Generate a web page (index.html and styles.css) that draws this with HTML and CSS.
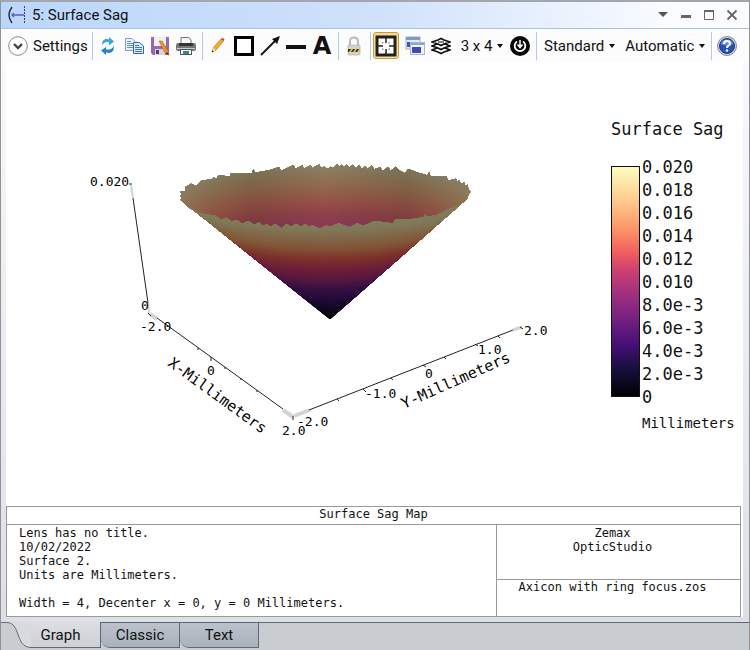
FILE: index.html
```html
<!DOCTYPE html>
<html lang="en">
<head>
  <meta charset="utf-8">
  <meta name="viewport" content="width=device-width, initial-scale=1.0">
  <title>5: Surface Sag</title>
  <link rel="stylesheet" href="styles.css">
</head>
<body>
  <!-- Title bar -->
  <header class="titlebar">
    <svg class="app-icon" width="20" height="20" viewBox="0 0 20 20" fill="none">
      <path d="M5 2 Q-1 10 5 18" stroke="#333" stroke-width="1.5"/>
      <path d="M5 10 H17 M7 8 L5 10 L7 12" stroke="#5560b8" stroke-width="1.3"/>
      <path d="M17.500 1 V18" stroke="#444" stroke-dasharray="2 1"/>
    </svg>
    <h1>5: Surface Sag</h1>
    <div class="window-buttons">
      <button aria-label="Menu"><svg width="12" height="12"><path d="M1 3 H11 L6 8 Z" fill="#555"/></svg></button>
      <button aria-label="Minimize"><svg width="12" height="12"><path d="M1 6 H11 V9 H1 Z" fill="#666"/></svg></button>
      <button aria-label="Maximize"><svg width="12" height="12"><path d="M1.500 2 V10.500 H10.500 V2" fill="none" stroke="#666"/><path d="M1 2 H11" stroke="#666" stroke-width="2"/></svg></button>
      <button aria-label="Close"><svg width="12" height="12"><path d="M1.500 1.500 L10.500 10.500 M10.500 1.500 L1.500 10.500" stroke="#666" stroke-width="1.8"/></svg></button>
    </div>
  </header>

  <!-- Toolbar -->
  <nav class="toolbar">
    <button class="settings">
      <svg width="20" height="20" viewBox="0 0 20 20" fill="none">
        <circle cx="10" cy="10" r="9.300" fill="#fff" stroke="#888"/>
        <path d="M6 8 L10 12 L14 8" stroke="#444" stroke-width="2.400"/>
      </svg>
      Settings
    </button>
    <span class="sep"></span>
    <button class="tool" aria-label="Refresh">
      <svg width="20" height="20" viewBox="0 0 20 20">
        <path d="M4 9 C4 4 7 2 11 3.500 V1 L16 5.500 L11 9.500 V6.500 C8 5.500 6 6.500 4 9 Z" fill="#35a7e0"/>
        <path d="M16 10 C16 16 13 18 8 16.500 V19 L3 14.500 L8 11 V13.500 C12 14 14 13 16 10 Z" fill="#1c86cf"/>
      </svg>
    </button>
    <button class="tool" aria-label="Copy">
      <svg width="20" height="20" viewBox="0 0 20 20">
        <path d="M1.500 2.500 H8 L11.500 6 V14.500 H1.500 Z" fill="#eaf3fd" stroke="#7b9fd0"/>
        <path d="M3 5.500 H7 M3 7.500 H9 M3 9.500 H9 M3 11.500 H9" stroke="#5f93cf"/>
        <path d="M9.500 6.500 H15.500 L19.500 10 V17.500 H9.500 Z" fill="#dcebfc" stroke="#3c62ad"/>
        <path d="M11 9.500 H15 M11 11.500 H18 M11 13.500 H18 M11 15.500 H18" stroke="#3f7ac4"/>
      </svg>
    </button>
    <button class="tool" aria-label="Save">
      <svg width="20" height="20" viewBox="0 0 20 20">
        <path d="M1 1 H19 V19 H3 L1 17 Z" fill="#9467b4"/>
        <rect x="4" y="1" width="12" height="9" fill="#f0edf5"/>
        <rect x="5" y="13" width="10" height="6" fill="#d8d4df"/>
        <rect x="6" y="14" width="3" height="4" fill="#54406c"/>
        <path d="M9 5 L12 5 L18 15 L19 19 L15 17 Z" fill="#f29421" stroke="#b35c0c" stroke-width=".5"/>
        <path d="M17 16 L19 19 L16 17.500 Z" fill="#222"/>
      </svg>
    </button>
    <button class="tool" aria-label="Print">
      <svg width="20" height="20" viewBox="0 0 20 20">
        <path d="M5 8 V1.500 H13 L15 4 V8" fill="#f7f7f7" stroke="#777"/>
        <rect x="0" y="7" width="20" height="8" rx="2" fill="#777"/>
        <path d="M3 7 H17 V10 H3 Z" fill="#333"/>
        <path d="M1 12.500 H19" stroke="#ccc"/>
        <rect x="4.500" y="13.500" width="11" height="5" fill="#fff" stroke="#555"/>
        <path d="M7 15 H10 V18 H7 Z" fill="#2b83c6"/>
        <path d="M10 15 H13 V18 H10 Z" fill="#2f8c78"/>
      </svg>
    </button>
    <span class="sep"></span>
    <button class="tool" aria-label="Pencil">
      <svg width="20" height="20" viewBox="0 0 20 20">
        <path d="M4 16 L5.500 11.500 L13 3 L15.500 5 L8 14 Z" fill="#f5ab24" stroke="#b67512" stroke-width=".7"/>
        <path d="M5.500 11.500 L8 14 L4 16 Z" fill="#ecd6a6"/>
        <path d="M4.500 14.500 L5.500 15.500 L3.500 16.500 Z" fill="#222"/>
        <path d="M13 3 L15.500 5 L16.500 3.500 L14.500 1.500 Z" fill="#d34848"/>
      </svg>
    </button>
    <button class="tool" aria-label="Rectangle">
      <svg width="20" height="20"><rect x="1.500" y="1.500" width="17" height="17" fill="#fff" stroke="#000" stroke-width="3"/></svg>
    </button>
    <button class="tool" aria-label="Arrow">
      <svg width="20" height="20"><path d="M1 19 L15 5" stroke="#111" stroke-width="1.800"/><path d="M20 0 L17 8 L12 3 Z" fill="#111"/></svg>
    </button>
    <button class="tool" aria-label="Line">
      <svg width="20" height="20"><rect y="9" width="20" height="4" fill="#111"/></svg>
    </button>
    <button class="tool text-tool" aria-label="Text">A</button>
    <span class="sep"></span>
    <button class="tool" aria-label="Lock">
      <svg width="20" height="20" viewBox="0 0 20 20">
        <path d="M6 10 V5 Q6 1.500 10 1.500 Q14 1.500 14 5 V10" fill="none" stroke="#bbb" stroke-width="2"/>
        <rect x="4" y="9" width="12" height="10" rx="1" fill="#d2d2d2" stroke="#aaa" stroke-width=".6"/>
        <rect x="4" y="13" width="12" height="3" fill="#333"/>
        <path d="M5 16 L7 13 H9 L7 16 Z M9 16 L11 13 H13 L11 16 Z M13 16 L15 13 H16 V16 Z" fill="#e0c12b"/>
      </svg>
    </button>
    <span class="sep"></span>
    <button class="tool active" aria-label="Fit window">
      <svg width="22" height="22" viewBox="0 0 22 22" fill="none">
        <rect x="2" y="2" width="18" height="18" fill="#fff" stroke="#222" stroke-width="3"/>
        <path d="M11 3 V8 M11 14 V19 M3 11 H8 M14 11 H19" stroke="#222" stroke-width="1.500"/>
        <path d="M7.500 9 V7.500 H9 M13 7.500 H14.500 V9 M7.500 13 V14.500 H9 M13 14.500 H14.500 V13" stroke="#aaa"/>
      </svg>
    </button>
    <button class="tool" aria-label="Windows">
      <svg width="20" height="20" viewBox="0 0 20 20">
        <rect x="1" y="1" width="14" height="12" fill="#e3e9f1" stroke="#aab4c2"/>
        <rect x="1" y="1" width="14" height="3" fill="#7c9acb"/>
        <rect x="2" y="6" width="5" height="5" fill="#3f55b5"/>
        <rect x="5.500" y="6.500" width="14" height="12" fill="#f2f4f8" stroke="#aab4c2"/>
        <rect x="6" y="7" width="13" height="2" fill="#8ba5d0"/>
        <rect x="7" y="11" width="9" height="6" fill="#3a4db0"/>
      </svg>
    </button>
    <button class="tool" aria-label="Layers">
      <svg width="20" height="20" viewBox="0 0 20 20" fill="#fff" stroke="#111" stroke-width="1.700">
        <path d="M1 14 L6 12 H14 L19 14 L13 16 L10 17.500 L7 16 Z"/>
        <path d="M1 10 L6 8 H14 L19 10 L13 12 L10 13.500 L7 12 Z"/>
        <path d="M1 6 L7 4 L10 2.500 L13 4 L19 6 L13 8 L10 9.500 L7 8 Z"/>
        <path d="M7 6 H13" stroke-width="1"/>
      </svg>
    </button>
    <button class="menu grid-size">3 x 4 <span class="caret"></span></button>
    <button class="tool" aria-label="Reset view">
      <svg width="20" height="20" viewBox="0 0 20 20" fill="none">
        <circle cx="10" cy="10" r="10" fill="#080808"/>
        <path d="M7 5.500 A5.300 5.300 0 1 0 13 5.500" stroke="#fff" stroke-width="1.800"/>
        <path d="M10 4 V10 M7.500 8.500 L10 11.500 L12.500 8.500" stroke="#fff" stroke-width="1.500"/>
      </svg>
    </button>
    <span class="sep"></span>
    <button class="menu">Standard <span class="caret"></span></button>
    <button class="menu">Automatic <span class="caret"></span></button>
    <span class="sep last"></span>
    <button class="tool" aria-label="Help">
      <svg width="20" height="20" viewBox="0 0 20 20">
        <circle cx="10" cy="10" r="9.500" fill="#d2d5dc" stroke="#888"/>
        <circle cx="10" cy="10" r="7.500" fill="#2451b5" stroke="#183a8c"/>
        <path d="M3.500 8 A7 7 0 0 1 16.500 8 Q10 11 3.500 8 Z" fill="#668bdc"/>
        <path d="M7 8 Q7 5 10 5 Q13 5 13 7.500 Q13 9 11.200 10 Q10 10.500 10 12" fill="none" stroke="#fff" stroke-width="2"/>
        <circle cx="10" cy="14.500" r="1.200" fill="#fff"/>
      </svg>
    </button>
  </nav>

  <main class="page">
    <div class="chart">
      <!-- 3D plot -->
      <svg class="plot" viewBox="6 62 600 444" preserveAspectRatio="xMinYMin meet">
        <defs>
          <clipPath id="outline">
            <path d="M32 150 L36 143 L31 138 L36 132 L31 125 L48 122 L45 112 L63 101 L80 108 L97 90 L108 93 L112 88 L125 90 L130 83 L140 85 L146 75 L180 80 L183 69 L215 71 L246 69 L250 57 L255 68 L300 60 L328 51 L333 63 L371 45 L376 56 L397 46 L402 56 L422 46 L427 55 L447 43 L452 53 L462 50 L474 58 L480 50 L490 55 L502 42 L508 50 L515 44 L522 52 L530 44 L538 52 L549 44 L556 55 L568 46 L575 58 L585 48 L592 58 L605 46 L612 58 L630 52 L638 63 L654 51 L662 62 L678 50 L690 62 L705 70 L715 57 L745 68 L772 76 L778 66 L781 78 L830 80 L834 92 L858 86 L862 97 L868 91 L873 102 L882 97 L886 107 L893 104 L895 118 L902 125 L895 132 L893 145 L480 508 Z"/>
          </clipPath>
          <clipPath id="front-side">
            <path d="M32 150 L60 175 L90 190 L137 197 L153 209 L170 203 L183 214 L203 211 L215 222 L236 213 L253 224 L267 217 L278 228 L290 222 L302 231 L315 222 L335 235 L350 222 L364 230 L378 221 L392 230 L406 222 L418 231 L427 225 L450 236 L468 226 L480 231 L505 220 L540 232 L562 220 L580 228 L612 213 L668 220 L677 208 L720 208 L761 202 L766 192 L770 201 L800 195 L835 178 L865 168 L893 145 L480 508 Z"/>
          </clipPath>
          <linearGradient id="shade">
            <stop offset="0" stop-opacity="0"/>
            <stop offset=".25" stop-opacity=".12"/>
            <stop offset=".5" stop-opacity="0"/>
            <stop offset=".78" stop-opacity=".12"/>
            <stop offset="1" stop-opacity="0"/>
          </linearGradient>
        </defs>
        <g transform="translate(170 150) scale(.33333)">
          <g id="inside" clip-path="url(#outline)"></g>
          <rect x="30" y="30" width="870" height="240" fill="url(#shade)" clip-path="url(#outline)"/>
          <g id="outside" clip-path="url(#front-side)"></g>
        </g>

        <!-- axis ends -->
        <g stroke="#d3d3d3" stroke-width="4">
          <path d="M131 185 L133 198" stroke-width="2"/>
          <path d="M148 303 L149 313" stroke-width="2"/>
          <path d="M150 314 L157 319"/>
          <path d="M283 410 L293 417"/>
          <path d="M294 416 L310 410"/>
          <path d="M513 330 L522 327" stroke-width="3"/>
        </g>
        <g class="axis">
          <path d="M133 198 L148 303"/>
          <path d="M157 318 L283 409"/>
          <path d="M309 410 L513 330"/>
          <path d="M129 184 H132 M148 313 L151 316 M211 357 V361 M293 416 V420 M363 389 L366 392 M423 365 L426 367 M475 344 L478 346 M520 327 L523 329 M198 348 V350 M225 367 V369 M241 378 V380 M257 390 V392 M337 399 L339 401 M391 378 L393 380 M444 357 L446 359 M498 336 L500 338"/>
        </g>
        <g class="tick">
          <text x="90" y="186">0.020</text>
          <text x="141" y="310">0</text>
          <text x="140" y="331">-2.0</text>
          <text x="207" y="375">0</text>
          <text x="282" y="435">2.0</text>
          <text x="297" y="426">-2.0</text>
          <text x="365" y="398">-1.0</text>
          <text x="425" y="378">0</text>
          <text x="478" y="354">1.0</text>
          <text x="524" y="335">2.0</text>
        </g>
        <g class="axis-title">
          <text transform="translate(167 365) rotate(36)">X-Millimeters</text>
          <text transform="translate(404 409) rotate(-24)">Y-Millimeters</text>
        </g>
      </svg>

      <!-- Color scale -->
      <div class="legend">
        <h2>Surface Sag</h2>
        <div class="scale">
          <div class="bar"></div>
          <ul>
            <li>0.020</li>
            <li>0.018</li>
            <li>0.016</li>
            <li>0.014</li>
            <li>0.012</li>
            <li>0.010</li>
            <li>8.0e-3</li>
            <li>6.0e-3</li>
            <li>4.0e-3</li>
            <li>2.0e-3</li>
            <li>0</li>
          </ul>
        </div>
        <p>Millimeters</p>
      </div>
    </div>

    <table class="info">
      <tr><th colspan="2">Surface Sag Map</th></tr>
      <tr>
        <td class="details" rowspan="2">Lens has no title.<br>10/02/2022<br>Surface 2.<br>Units are Millimeters.<br><br>Width = 4, Decenter x = 0, y = 0 Millimeters.</td>
        <td class="product">Zemax<br>OpticStudio</td>
      </tr>
      <tr><td class="file">Axicon with ring focus.zos</td></tr>
    </table>
  </main>

  <!-- View tabs -->
  <footer class="tabs">
    <svg class="tab-curve" width="30" height="27" viewBox="0 0 30 27">
      <path d="M6 0 H30 V26 C14 26 20 1 6 1 Z" fill="#d8dadd"/>
      <path d="M0 .5 H6 C20 1 14 25.500 30 25.500" fill="none" stroke="#5f6878"/>
    </svg>
    <button class="tab current">Graph</button>
    <button class="tab">Classic</button>
    <button class="tab">Text</button>
  </footer>

  <script src="plot.js"></script>
</body>
</html>
```
FILE: styles.css
```css
* {
  box-sizing: border-box;
}

body {
  font-family: Roboto, "Open Sans", sans-serif;
  font-size: 15px;
  color: #111;
  margin: 0;
  min-height: 100vh;
  display: flex;
  flex-direction: column;
  background: linear-gradient(#fcfcfd, #dcdee2);
  border: 1px solid #8e929a;
  border-top: 2px solid #a3a6ac;
  border-bottom: none;
}

button {
  font: inherit;
  color: inherit;
  background: none;
  border: none;
  padding: 0;
  display: flex;
  align-items: center;
  justify-content: center;
  white-space: nowrap;
}

/* Title bar */
.titlebar {
  display: flex;
  align-items: center;
  height: 27px;
  padding: 0 11px 0 6px;
  background: linear-gradient(to right, #bbd6fb, #cfe1fc 50%, #fafcff 90%);
  border-bottom: 1px solid #a9c4e4;
}

.titlebar h1 {
  font-size: 15px;
  font-weight: normal;
  margin: 0 auto 0 5px;
}

.window-buttons {
  display: flex;
  gap: 11px;
}

/* Toolbar */
.toolbar {
  display: flex;
  align-items: center;
  height: 33px;
  padding: 0 9px 0 7px;
  background: #fcfcfd;
}

.settings {
  flex: none;
  width: 81px;
  gap: 5px;
  justify-content: flex-start;
}

.sep {
  flex: none;
  width: 1px;
  height: 28px;
  margin: 0 2px 0 3px;
  background: #b3cbe6;
}

.tool {
  width: 26px;
  height: 27px;
  flex: none;
}

.text-tool {
  font-family: "DejaVu Sans", sans-serif;
  font-size: 24px;
  font-weight: bold;
  line-height: 24px;
}

.active {
  background: linear-gradient(#fbd98d, #fbe39e);
  border: 1px solid #c99a3c;
  border-radius: 3px;
  margin-right: 3px;
}

.menu {
  gap: 5px;
  padding: 0 5px;
}

.grid-size {
  width: 53px;
  padding: 0 0 0 3px;
}

.caret {
  border: 3px solid transparent;
  border-top: 4px solid #111;
  border-bottom: none;
}

.last {
  margin-left: auto;
}

/* Chart */
.page {
  flex: 1;
  display: flex;
  flex-direction: column;
  margin: 0 6px 5px 5px;
  padding-right: 2px;
  background: #fff;
}

.chart {
  flex: 1;
  display: flex;
  font-family: "DejaVu Sans Mono", monospace;
}

.plot {
  flex: 1;
  min-width: 0;
  height: 444px;
}

.axis {
  fill: none;
  stroke: #222;
  stroke-width: 1;
}

.tick {
  font-size: 13px;
}

.axis-title {
  font-size: 15px;
}

.legend {
  width: 130px;
  padding-top: 57px;
}

.legend h2 {
  font-size: 17px;
  font-weight: normal;
  line-height: 20px;
  margin: 0 0 17px;
}

.scale {
  display: flex;
}

.bar {
  width: 29px;
  margin: 10px 0 12px;
  border: 1px solid #111;
  background: linear-gradient(#fcfdbf, #fec98d 15%, #fd9567 27%, #f1605d 37%, #cd4071 45%, #9e2f7f 56%, #721f81 67%, #440f76 78%, #180f3d 88%, #000004);
}

.legend ul {
  list-style: none;
  margin: 0 0 0 2px;
  padding: 0;
  font-size: 17px;
  line-height: 23px;
}

.legend p {
  font-size: 14px;
  line-height: 20px;
  margin: 4px 0 0 31px;
}

/* Info table */
.info {
  width: 100%;
  border-collapse: collapse;
  font-family: "DejaVu Sans Mono", monospace;
  font-size: 12px;
  line-height: 14px;
}

.info th,
.info td {
  border: 1px solid #999;
  font-weight: normal;
  text-align: center;
  vertical-align: top;
  padding: 0 12px 0 0;
}

.info th {
  height: 18px;
  padding: 0;
}

.info .details {
  width: 490px;
  text-align: left;
  padding: 1px 12px;
}

.info .product {
  height: 55px;
  padding-top: 1px;
}

.info .file {
  height: 37px;
}

/* Tabs */
.tabs {
  display: flex;
  align-items: flex-start;
  height: 28px;
  background: #c9ccd1;
  border-top: 1px solid #5f6878;
}

.tab-curve {
  margin-top: -1px;
}

.tab {
  width: 79px;
  height: 26px;
  margin-top: -1px;
  border: 1px solid #5f6878;
  border-bottom-left-radius: 9px;
  background: linear-gradient(#bcc2cb, #a9b1bd);
}

.tab + .tab {
  border-left-width: 0;
}

.current {
  width: 70px;
  padding-right: 10px;
  background: linear-gradient(#dcdee2, #cdd0d5);
  border-top: none;
  border-left: none;
  border-radius: 0;
}
```
FILE: plot.js
```javascript
// The cone is a stack of thin ellipses between the tip and the rim
const tip = { x: 480, y: 508 };
const rim = { x: 466, y: 141, rx: 435, ry: 90 };
const steps = 220;

// [height, r, g, b]
const outsideColors = [
  [0, 2, 4, 6], [0.1, 14, 8, 30], [0.21, 35, 10, 55], [0.32, 52, 16, 66],
  [0.42, 85, 25, 65], [0.54, 110, 32, 55], [0.65, 125, 50, 45],
  [0.77, 130, 85, 55], [0.98, 128, 122, 90], [1.1, 130, 125, 92]
];
const insideColors = [
  [0, 130, 50, 85], [0.63, 138, 60, 85], [0.7, 145, 68, 72],
  [0.78, 152, 85, 72], [0.89, 145, 110, 80], [1, 138, 130, 100], [1.1, 128, 125, 92]
];

function colorAt(colors, t) {
  let i = 1;
  while (i < colors.length - 1 && colors[i][0] < t) i++;
  const a = colors[i - 1];
  const b = colors[i];
  const k = Math.min(1, (t - a[0]) / (b[0] - a[0]));
  const c = [1, 2, 3].map(n => Math.round(a[n] + (b[n] - a[n]) * k));
  return `rgb(${c})`;
}

function addRing(group, colors, t) {
  const ring = document.createElementNS('http://www.w3.org/2000/svg', 'ellipse');
  ring.setAttribute('cx', tip.x + (rim.x - tip.x) * t);
  ring.setAttribute('cy', tip.y + (rim.y - tip.y) * t);
  ring.setAttribute('rx', rim.rx * t * 1.05 + 4);
  ring.setAttribute('ry', rim.ry * t + 2);
  ring.setAttribute('fill', colorAt(colors, t));
  group.appendChild(ring);
}

const inside = document.getElementById('inside');
const outside = document.getElementById('outside');
for (let i = 0; i <= steps; i++) {
  addRing(outside, outsideColors, 1.1 * i / steps);
  addRing(inside, insideColors, 1.1 * (steps - i) / steps);
}
```
